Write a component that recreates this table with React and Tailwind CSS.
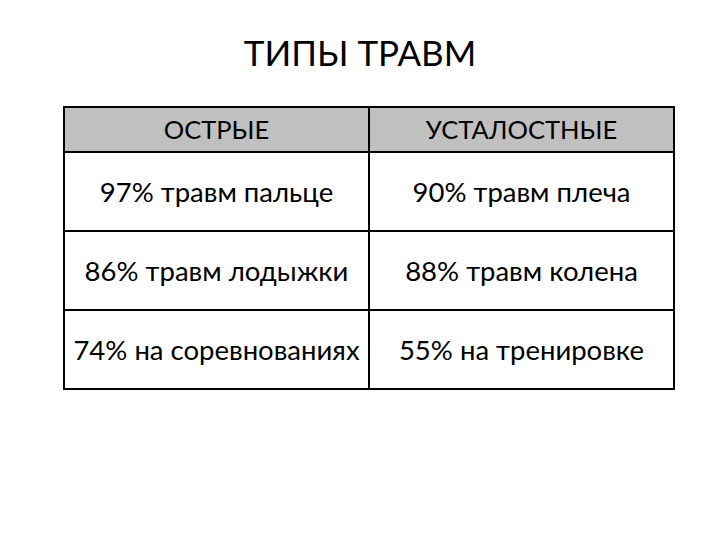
import React from 'react';

const rows = [
  ['97% травм пальце', '90% травм плеча'],
  ['86% травм лодыжки', '88% травм колена'],
  ['74% на соревнованиях', '55% на тренировке'],
];

export default function App() {
  return (
    <div
      className="w-[720px] h-[540px] bg-white text-black"
      style={{ fontFamily: 'Lato, "Open Sans", sans-serif' }}
    >
      <h1 className="pt-[31px] h-[106px] text-center text-[35px] leading-[42px] font-normal">
        ТИПЫ ТРАВМ
      </h1>

      <table className="ml-[63px] w-[612px] border-collapse table-fixed">
        <thead>
          <tr className="h-[45px] bg-[#c0c0c0]">
            <th className="border-2 border-black text-[25.5px] font-normal">ОСТРЫЕ</th>
            <th className="border-2 border-black text-[25.5px] font-normal">УСТАЛОСТНЫЕ</th>
          </tr>
        </thead>
        <tbody>
          {rows.map((r, i) => (
            <tr key={i} className="h-[79px]">
              {r.map((c, j) => (
                <td key={j} className="border-2 border-black text-center text-[27.5px] whitespace-nowrap">
                  {c}
                </td>
              ))}
            </tr>
          ))}
        </tbody>
      </table>
    </div>
  );
}
